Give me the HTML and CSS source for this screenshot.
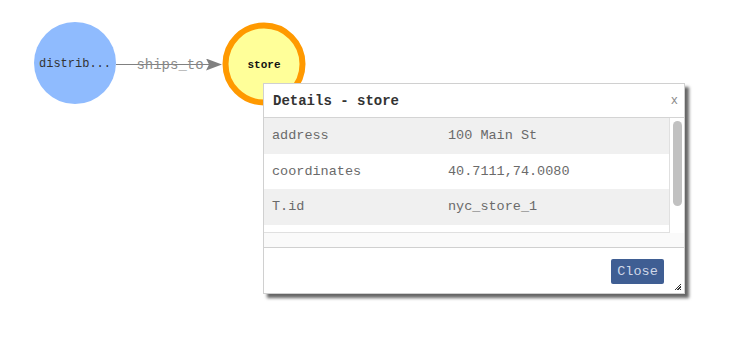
FILE: index.html
```html
<!DOCTYPE html>
<html lang="en">
<head>
    <meta charset="UTF-8">
    <title>Graph Details</title>
    <link rel="stylesheet" href="styles.css">
</head>
<body>

    <div class="canvas">
        <!-- Graph -->
        <svg class="graph" width="729" height="337" viewBox="0 0 729 337">
            <defs>
                <marker id="arrow" markerWidth="16" markerHeight="12" refX="15" refY="6" orient="auto" markerUnits="userSpaceOnUse">
                    <path d="M0,0 L16,6 L0,12 L3,6 Z" fill="#808080"/>
                </marker>
            </defs>
            <line x1="116" y1="64.5" x2="221" y2="64.5" stroke="#808080" stroke-width="1" marker-end="url(#arrow)"/>
            <text class="edge-label" x="170" y="69" text-anchor="middle">ships_to</text>

            <circle cx="75" cy="63" r="41" fill="#8fbbfe"/>
            <text class="node-label" x="75" y="67" text-anchor="middle">distrib...</text>

            <circle cx="264" cy="64" r="38.5" fill="#ffff99" stroke="#ff9900" stroke-width="6"/>
            <text class="node-label bold" x="264" y="68" text-anchor="middle">store</text>
        </svg>

        <!-- Details dialog -->
        <div class="dialog">
            <div class="dialog-header">
                <span class="dialog-title">Details - store</span>
                <span class="dialog-close">x</span>
            </div>
            <div class="dialog-body">
                <div class="props">
                    <div class="prop-row">
                        <span class="prop-key">address</span>
                        <span class="prop-val">100 Main St</span>
                    </div>
                    <div class="prop-row">
                        <span class="prop-key">coordinates</span>
                        <span class="prop-val">40.7111,74.0080</span>
                    </div>
                    <div class="prop-row">
                        <span class="prop-key">T.id</span>
                        <span class="prop-val">nyc_store_1</span>
                    </div>
                </div>
                <div class="scrollbar"><div class="thumb"></div></div>
            </div>
            <div class="dialog-footer">
                <button class="close-btn">Close</button>
                <span class="resize"></span>
            </div>
        </div>
    </div>

</body>
</html>
```

FILE: styles.css
```css
/* General Reset */
* {
    margin: 0;
    padding: 0;
    box-sizing: border-box;
}

body {
    font-family: "Liberation Mono", "Courier New", monospace;
    background-color: #fff;
    color: #333;
}

/* Graph canvas */
.canvas {
    position: relative;
    width: 729px;
    height: 337px;
    overflow: hidden;
}

.graph {
    display: block;
}

.edge-label {
    font-family: "Liberation Mono", monospace;
    font-size: 14px;
    fill: #8a8a8a;
}

.node-label {
    font-family: "Liberation Mono", monospace;
    font-size: 12px;
    fill: #333;
}

.node-label.bold {
    font-size: 11px;
    font-weight: bold;
    fill: #111;
}

/* Dialog */
.dialog {
    position: absolute;
    left: 263px;
    top: 83px;
    width: 422px;
    height: 211px;
    background-color: #fff;
    border: 1px solid #d0d0d0;
    box-shadow: 4px 4px 3px rgba(0, 0, 0, 0.6);
    display: flex;
    flex-direction: column;
}

.dialog-header {
    height: 34px;
    display: flex;
    align-items: center;
    justify-content: space-between;
    padding: 0 6px 0 9px;
    border-bottom: 1px solid #d4d4d4;
}

.dialog-title {
    font-size: 14px;
    font-weight: bold;
    color: #333;
}

.dialog-close {
    font-size: 12px;
    color: #888;
}

.dialog-body {
    height: 130px;
    display: flex;
    background-color: #fafafa;
    border-bottom: 1px solid #d0d0d0;
}

.props {
    width: 406px;
    height: 115px;
    overflow: hidden;
    background-color: #fff;
    border-right: 1px solid #e0e0e0;
    border-bottom: 1px solid #e0e0e0;
}

.prop-row {
    display: flex;
    align-items: center;
    height: 35.5px;
    padding-left: 8px;
    font-size: 13.5px;
    color: #6a6a6a;
}

.prop-row:nth-child(odd) {
    background-color: #f0f0f0;
}

.prop-key {
    width: 176px;
}

.scrollbar {
    width: 14px;
    height: 115px;
    background-color: #fff;
    padding: 3px 2px 0 2px;
}

.thumb {
    width: 9px;
    height: 85px;
    margin-left: 1px;
    background-color: #c1c1c1;
    border-radius: 5px;
}

.dialog-footer {
    flex: 1;
    position: relative;
    display: flex;
    justify-content: flex-end;
    align-items: flex-start;
    padding: 11px 20px 0 0;
}

.close-btn {
    width: 53px;
    height: 25px;
    font-family: "Liberation Mono", monospace;
    font-size: 13.5px;
    color: #d0d8e8;
    background-color: #3f5e93;
    border: none;
    border-radius: 2px;
}

.resize {
    position: absolute;
    right: 3px;
    bottom: 3px;
    width: 7px;
    height: 7px;
    background: repeating-linear-gradient(135deg, transparent 0 1px, #333 1px 2px);
    clip-path: polygon(100% 0, 100% 100%, 0 100%);
}
```
